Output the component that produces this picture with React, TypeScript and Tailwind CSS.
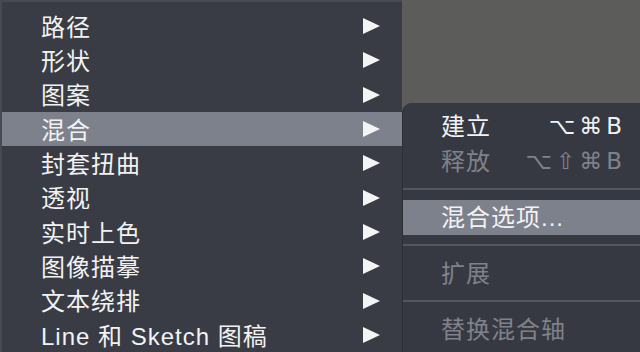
import React from 'react';

const font = { fontFamily: '"Liberation Sans", "Noto Sans CJK SC", sans-serif' };

const mainItems = ['路径', '形状', '图案', '混合', '封套扭曲', '透视', '实时上色', '图像描摹', '文本绕排', 'Line 和 Sketch 图稿'];

const Arrow = () => (
  <svg width="17" height="16" viewBox="0 0 17 16" className="shrink-0">
    <polygon points="0,0 17,8 0,16" fill="#f4f4f4" />
  </svg>
);

type SubItem =
  | { kind: 'item'; label: string; shortcut?: string; disabled?: boolean; active?: boolean }
  | { kind: 'sep' };

const subItems: SubItem[] = [
  { kind: 'item', label: '建立', shortcut: '⌥⌘B' },
  { kind: 'item', label: '释放', shortcut: '⌥⇧⌘B', disabled: true },
  { kind: 'sep' },
  { kind: 'item', label: '混合选项...', active: true },
  { kind: 'sep' },
  { kind: 'item', label: '扩展', disabled: true },
  { kind: 'sep' },
  { kind: 'item', label: '替换混合轴', disabled: true },
];

export default function App() {
  return (
    <div className="w-[640px] h-[352px] overflow-hidden flex bg-[#5c5d5b] text-[24px] leading-none tracking-[1px]" style={font}>
      {/* main menu */}
      <div className="w-[402px] h-full bg-[#393c44] border-l-2 border-t-2 border-[#474a52] pt-[7px] shrink-0">
        {mainItems.map((label, i) => (
          <div
            key={label}
            className={`h-[34.33px] flex items-center justify-between pl-[39px] pr-[22px] ${
              i === 3 ? 'bg-[#7d818b]' : ''
            }`}
          >
            <span className="text-[#f2f2f2] pt-[3px]">{label}</span>
            <Arrow />
          </div>
        ))}
      </div>

      {/* sub menu */}
      <div className="flex-1 flex flex-col">
        <div className="h-[103px] shrink-0" />
        <div className="flex-1 bg-[#363941] rounded-tl-[10px] border-l border-[#2c2e34] pt-[5.5px]">
          {subItems.map((it, i) =>
            it.kind === 'sep' ? (
              <div key={i} className="h-[21px] flex items-center">
                <div className="h-[2px] w-full bg-[#53565e]" />
              </div>
            ) : (
              <div
                key={i}
                className={`h-[35px] flex items-center justify-between pl-[38px] pr-[14px] ${
                  it.active ? 'bg-[#7d818b]' : ''
                } ${it.disabled ? 'text-[#7f828a]' : 'text-[#f2f2f2]'}`}
              >
                <span className="pt-[2px]">{it.label}</span>
                {it.shortcut && (
                  <span className="tracking-[4px]" style={{ fontFamily: '"DejaVu Sans", sans-serif', fontSize: '23px' }}>
                    {it.shortcut}
                  </span>
                )}
              </div>
            )
          )}
        </div>
      </div>
    </div>
  );
}
